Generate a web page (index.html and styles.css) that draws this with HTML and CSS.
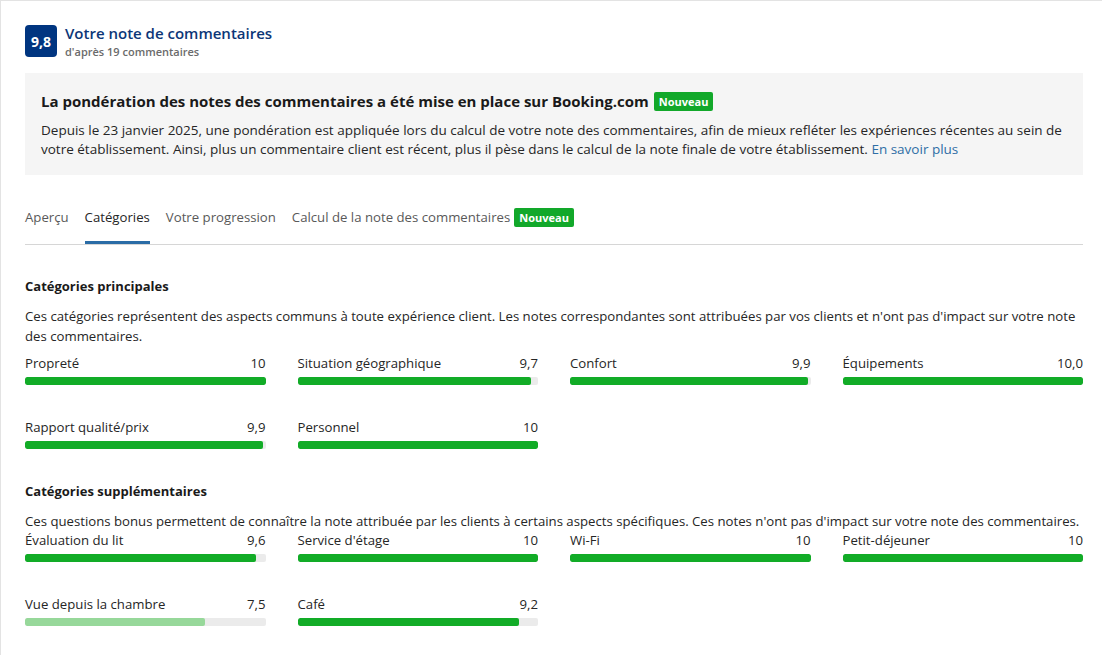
FILE: index.html
```html
<!DOCTYPE html>
<html lang="fr">
<head>
<meta charset="utf-8">
<title>Votre note de commentaires</title>
<link rel="stylesheet" href="styles.css">
</head>
<body>
<div class="card">
  <div class="header">
    <div class="score">9,8</div>
    <div class="header-text">
      <div class="title">Votre note de commentaires</div>
      <div class="subtitle">d'après 19 commentaires</div>
    </div>
  </div>

  <div class="notice">
    <div class="notice-title">La pondération des notes des commentaires a été mise en place sur Booking.com <span class="badge">Nouveau</span></div>
    <p class="notice-body">Depuis le 23 janvier 2025, une pondération est appliquée lors du calcul de votre note des commentaires, afin de mieux refléter les expériences récentes au sein de votre établissement. Ainsi, plus un commentaire client est récent, plus il pèse dans le calcul de la note finale de votre établissement. <a class="link" href="#">En savoir plus</a></p>
  </div>

  <div class="tabs">
    <div class="tab">Aperçu</div>
    <div class="tab active">Catégories</div>
    <div class="tab">Votre progression</div>
    <div class="tab">Calcul de la note des commentaires <span class="badge">Nouveau</span></div>
  </div>

  <div class="section first">
    <div class="section-title">Catégories principales</div>
    <p class="section-desc">Ces catégories représentent des aspects communs à toute expérience client. Les notes correspondantes sont attribuées par vos clients et n'ont pas d'impact sur votre note des commentaires.</p>
    <div class="grid">
      <div class="item"><div class="item-head"><span>Propreté</span><span>10</span></div><div class="track"><div class="fill" style="width:100%"></div></div></div>
      <div class="item"><div class="item-head"><span>Situation géographique</span><span>9,7</span></div><div class="track"><div class="fill" style="width:97%"></div></div></div>
      <div class="item"><div class="item-head"><span>Confort</span><span>9,9</span></div><div class="track"><div class="fill" style="width:99%"></div></div></div>
      <div class="item"><div class="item-head"><span>Équipements</span><span>10,0</span></div><div class="track"><div class="fill" style="width:100%"></div></div></div>
      <div class="item"><div class="item-head"><span>Rapport qualité/prix</span><span>9,9</span></div><div class="track"><div class="fill" style="width:99%"></div></div></div>
      <div class="item"><div class="item-head"><span>Personnel</span><span>10</span></div><div class="track"><div class="fill" style="width:100%"></div></div></div>
    </div>
  </div>

  <div class="section second">
    <div class="section-title">Catégories supplémentaires</div>
    <p class="section-desc">Ces questions bonus permettent de connaître la note attribuée par les clients à certains aspects spécifiques. Ces notes n'ont pas d'impact sur votre note des commentaires.</p>
    <div class="grid">
      <div class="item"><div class="item-head"><span>Évaluation du lit</span><span>9,6</span></div><div class="track"><div class="fill" style="width:96%"></div></div></div>
      <div class="item"><div class="item-head"><span>Service d'étage</span><span>10</span></div><div class="track"><div class="fill" style="width:100%"></div></div></div>
      <div class="item"><div class="item-head"><span>Wi-Fi</span><span>10</span></div><div class="track"><div class="fill" style="width:100%"></div></div></div>
      <div class="item"><div class="item-head"><span>Petit-déjeuner</span><span>10</span></div><div class="track"><div class="fill" style="width:100%"></div></div></div>
      <div class="item"><div class="item-head"><span>Vue depuis la chambre</span><span>7,5</span></div><div class="track"><div class="fill light" style="width:75%"></div></div></div>
      <div class="item"><div class="item-head"><span>Café</span><span>9,2</span></div><div class="track"><div class="fill" style="width:92%"></div></div></div>
    </div>
  </div>
</div>
</body>
</html>
```

FILE: styles.css
```css
* { box-sizing: border-box; }
html, body { margin: 0; padding: 0; background: #fff; }
body {
  font-family: "Open Sans", "Noto Sans", sans-serif;
  font-size: 13.2px;
  color: #262626;
  overflow: hidden;
}
.card {
  border-top: 1px solid #e3e3e3;
  border-left: 1px solid #e3e3e3;
  padding: 24px 19px 40px 24px;
  min-height: 655px;
}
.header {
  display: flex;
  gap: 8px;
  align-items: flex-start;
  height: 34px;
}
.score {
  width: 32px;
  height: 32px;
  background: #003580;
  color: #fff;
  border-radius: 4px;
  font-weight: 700;
  font-size: 14px;
  display: flex;
  align-items: center;
  justify-content: center;
}
.header-text { display: flex; flex-direction: column; }
.title {
  color: #0c3677;
  font-size: 15px;
  font-weight: 600;
  line-height: 20px;
  margin-top: -2px;
}
.subtitle {
  color: #6b6b6b;
  font-size: 11px;
  font-weight: 600;
  line-height: 16px;
  margin-top: 1px;
}
.notice {
  margin-top: 14px;
  background: #f5f5f5;
  padding: 17px 16px 16px 16px;
}
.notice-title {
  font-weight: 700;
  font-size: 15px;
  line-height: 22px;
  color: #1a1a1a;
  display: flex;
  align-items: center;
  gap: 5px;
}
.badge {
  display: inline-block;
  background: #12a82a;
  color: #fff;
  font-size: 11px;
  font-weight: 700;
  line-height: 19px;
  padding: 0 5px;
  border-radius: 2px;
}
.notice-body {
  margin: 9px 0 0 0;
  font-size: 13.5px;
  line-height: 19px;
}
.link { color: #2f6ea5; text-decoration: none; }
.tabs {
  margin-top: 24px;
  display: flex;
  gap: 16px;
  border-bottom: 1px solid #d6d6d6;
}
.tab {
  padding: 8px 0 14px 0;
  line-height: 20px;
  color: #595959;
  border-bottom: 3px solid transparent;
  display: flex;
  align-items: center;
  gap: 4px;
}
.tab.active {
  color: #262626;
  border-bottom-color: #2a6ca6;
}
.section-title {
  font-weight: 700;
  font-size: 13px;
  line-height: 20px;
  color: #1a1a1a;
}
.section.first { margin-top: 31px; }
.section.second { margin-top: 32px; }
.section-desc {
  margin: 10px 0 0 0;
  line-height: 20px;
}
.section.first .grid { margin-top: 7px; }
.section.second .grid { margin-top: -1px; }
.grid {
  display: grid;
  grid-template-columns: repeat(4, 1fr);
  column-gap: 32px;
  row-gap: 32px;
}
.item-head {
  display: flex;
  justify-content: space-between;
  line-height: 20px;
}
.track {
  margin-top: 4px;
  height: 8px;
  background: #ebebeb;
  border-radius: 2px;
  overflow: hidden;
}
.fill {
  height: 100%;
  background: #12ac27;
  border-radius: 2px;
}
.fill.light { background: #97d89a; }
```
